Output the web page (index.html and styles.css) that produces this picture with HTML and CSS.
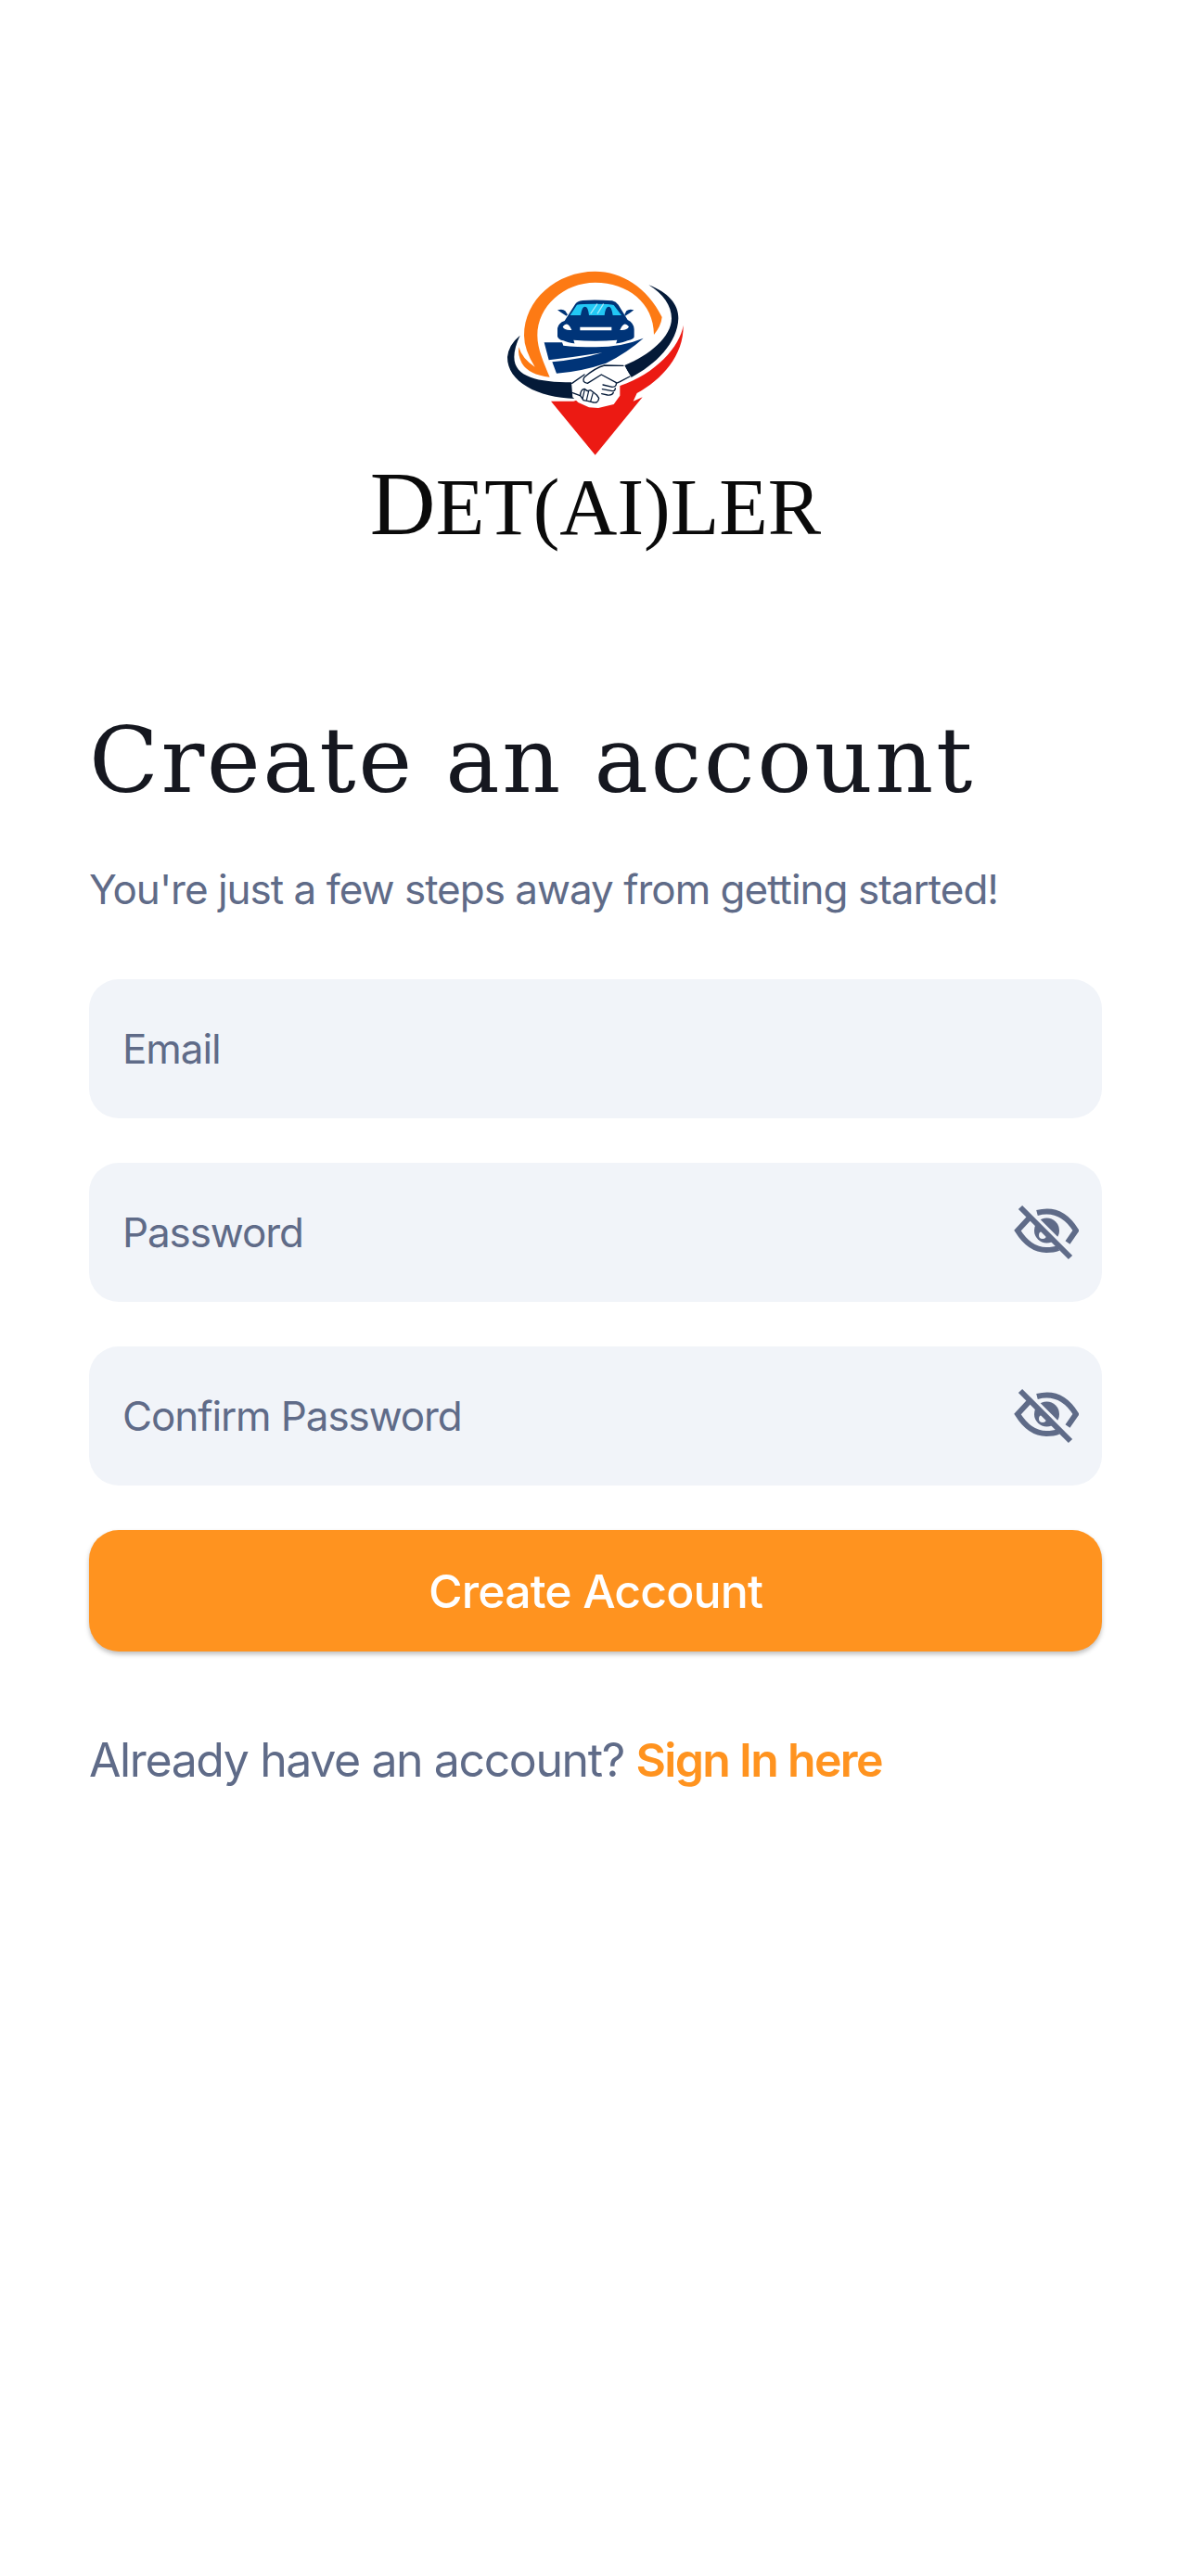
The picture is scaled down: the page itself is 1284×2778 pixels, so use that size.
FILE: index.html
```html
<!DOCTYPE html>
<html lang="en">
<head>
    <meta charset="UTF-8">
    <meta name="viewport" content="width=device-width, initial-scale=1.0">
    <title>Create an account</title>
    <link rel="stylesheet" href="styles.css">
</head>
<body>
    <div class="logo">
        <svg class="logo-mark" viewBox="0 0 720 660" width="240" height="220" aria-hidden="true">
            <!-- pin tip and right red swoosh -->
            <path fill="#ec1a13" d="M222 458 L365 632 L518 445 L488 458 L500 432 C580 388 652 310 650 212 C640 280 560 370 445 408 L295 458 Z"/>
            <!-- orange ring -->
            <path fill="#fd7a14" d="M218 380 Q150 372 128 335 Q114 310 118 283 Q128 320 170 347 Q135 290 135 245 C135 130 240 38 365 38 C450 38 535 90 581 186 Q578 215 555 243 C555 140 470 74 365 74 C265 74 178 150 178 245 C178 290 200 335 218 380 Z"/>
            <!-- navy swooshes -->
            <path fill="#041a38" d="M538 82 C600 105 635 145 634 190 C632 270 560 340 480 382 L460 342 C540 310 612 250 612 190 C612 150 585 110 538 82 Z"/>
            <path fill="#041a38" d="M122 245 Q85 275 81 315 C80 395 180 447 300 450 L290 397 C180 397 103 380 103 315 Q103 285 122 245 Z"/>
            <!-- road -->
            <path fill="#003478" d="M200 268 L258 268 L262 278 Q300 283 368 283 Q450 283 521 254 Q470 300 400 335 Q320 362 240 368 L226 331 Q320 322 388 301 Q300 315 215 325 Z"/>
            <!-- car -->
            <path fill="#003478" d="M243 222 Q246 205 266 198 L300 145 Q305 134 325 132 Q365 128 420 133 Q432 136 440 146 L470 195 Q490 205 491 225 L491 250 Q490 258 470 262 Q440 275 365 276 Q290 275 262 262 Q245 258 243 248 Z"/>
            <path fill="#003478" d="M272 182 Q255 172 243 163 Q260 158 268 166 L276 178 Z M462 182 Q480 172 490 163 Q475 158 466 166 L460 178 Z"/>
            <path fill="#22c8f5" d="M284 180 L306 146 Q320 143 365 143 Q415 143 425 147 L450 180 L422 180 Q418 152 409 152 Q398 152 395 180 L345 180 Q342 152 332 152 Q322 152 318 180 Z"/>
            <path fill="none" stroke="#a5e8fb" stroke-width="4" d="M350 175 L372 143 M372 175 L392 143"/>
            <path fill="#fff" d="M316 218 L418 218 L418 229 L316 229 Z M295 260 Q365 266 436 260 L431 275 Q365 280 300 277 Z M260 217 Q276 195 289 228 Q265 230 260 217 Z M474 217 Q458 195 445 228 Q468 230 474 217 Z"/>
            <!-- handshake -->
            <path fill="#fff" d="M288 397 L325 372 L390 340 L458 343 L482 380 L445 408 L445 440 L425 468 L375 480 L345 478 L310 462 L292 445 Z"/>
            <path fill="none" stroke="#041a38" stroke-width="4" stroke-linejoin="round" stroke-linecap="round" d="M456 343 L395 342 Q365 350 330 380 Q320 397 340 400 L385 372 L433 398 Q435 412 420 412 L390 405 M430 416 Q430 425 420 425 L388 419 M424 430 Q420 440 405 438 L386 434 M477 378 L445 395 L433 400 M290 400 L330 372 M292 431 L316 440"/>
            <path fill="#fff" stroke="#041a38" stroke-width="4" stroke-linejoin="round" d="M317 440 Q317 420 330 418 L340 425 L350 422 L360 430 L370 438 L377 448 Q375 467 355 461 L340 457 L327 455 Z"/>
            <path fill="none" stroke="#041a38" stroke-width="3.5" d="M331 420 L324 450 M344 425 L337 455 M358 431 L350 459"/>
        </svg>
        <div class="logo-name">D<span class="logo-small">ET(AI)LER</span></div>
    </div>

    <h1 class="title">Create an account</h1>
    <p class="subtitle">You're just a few steps away from getting started!</p>

    <form class="form">
        <div class="field">
            <input type="email" placeholder="Email">
        </div>
        <div class="field">
            <input type="password" placeholder="Password">
            <svg class="eye" viewBox="33 28 70 62" width="70" height="62" aria-hidden="true">
                <path class="eye-line" d="M58 38 Q84 31 100 57 L91 70 M50 43 L37 57 Q50 78 68 78 Q76 78 81 76"/>
                <circle class="eye-dot" cx="68.5" cy="57" r="13.5"/>
                <circle class="eye-hole" cx="64" cy="62" r="4"/>
                <path class="eye-gap" d="M45 32 L99 86"/>
                <path class="eye-line" d="M40 32 L94 86"/>
            </svg>
        </div>
        <div class="field">
            <input type="password" placeholder="Confirm Password">
            <svg class="eye" viewBox="33 28 70 62" width="70" height="62" aria-hidden="true">
                <path class="eye-line" d="M58 38 Q84 31 100 57 L91 70 M50 43 L37 57 Q50 78 68 78 Q76 78 81 76"/>
                <circle class="eye-dot" cx="68.5" cy="57" r="13.5"/>
                <circle class="eye-hole" cx="64" cy="62" r="4"/>
                <path class="eye-gap" d="M45 32 L99 86"/>
                <path class="eye-line" d="M40 32 L94 86"/>
            </svg>
        </div>
        <button type="button" class="submit">Create Account</button>
    </form>

    <p class="signin">Already have an account? <a href="#">Sign In here</a></p>
</body>
</html>
```

FILE: styles.css
```css
* {
    margin: 0;
    padding: 0;
    box-sizing: border-box;
}
body {
    background: #fff;
    color: #5f6b88;
    font-family: 'Inter', sans-serif;
    padding: 280px 96px 0;
}
.logo {
    display: flex;
    flex-direction: column;
    align-items: center;
}
.logo-mark {
    display: block;
    margin-right: 4px;
}
.logo-name {
    font-family: 'Liberation Serif', serif;
    font-size: 98px;
    line-height: 104px;
    color: #0a0a0a;
    margin-top: -9px;
    white-space: nowrap;
}
.logo-small {
    font-size: 86px;
}
.title {
    font-family: 'DejaVu Serif', serif;
    font-weight: 400;
    font-size: 98px;
    letter-spacing: 2.5px;
    line-height: 120px;
    color: #15171f;
    margin-top: 161px;
}
.subtitle {
    font-size: 44px;
    letter-spacing: -1px;
    line-height: 56px;
    margin-top: 51px;
}
.form {
    display: flex;
    flex-direction: column;
    gap: 48px;
    margin-top: 69px;
}
.field {
    display: flex;
    align-items: center;
    height: 150px;
    background: #f1f4f9;
    border-radius: 32px;
    padding: 0 25px 0 36px;
}
.field input {
    flex: 1;
    min-width: 0;
    border: none;
    outline: none;
    background: none;
    font-family: inherit;
    font-size: 44px;
    letter-spacing: -1.1px;
    color: #5f6b88;
}
.field input::placeholder {
    color: #5f6b88;
    opacity: 1;
}
.eye {
    flex: none;
}
.eye-line {
    fill: none;
    stroke: #5f6b88;
    stroke-width: 6;
}
.eye-dot {
    fill: #5f6b88;
}
.eye-hole {
    fill: #f1f4f9;
}
.eye-gap {
    fill: none;
    stroke: #f1f4f9;
    stroke-width: 5;
}
.submit {
    height: 131px;
    border: none;
    border-radius: 32px;
    background: #ff931f;
    color: #fff;
    font-family: inherit;
    font-size: 50px;
    letter-spacing: -0.9px;
    font-weight: 500;
    box-shadow: 0 3px 5px rgba(0,0,0,0.25);
}
.signin {
    font-size: 50px;
    letter-spacing: -1.4px;
    line-height: 64px;
    margin-top: 85px;
}
.signin a {
    color: #ff931f;
    font-weight: 600;
    letter-spacing: -1.7px;
    text-decoration: none;
}
```
